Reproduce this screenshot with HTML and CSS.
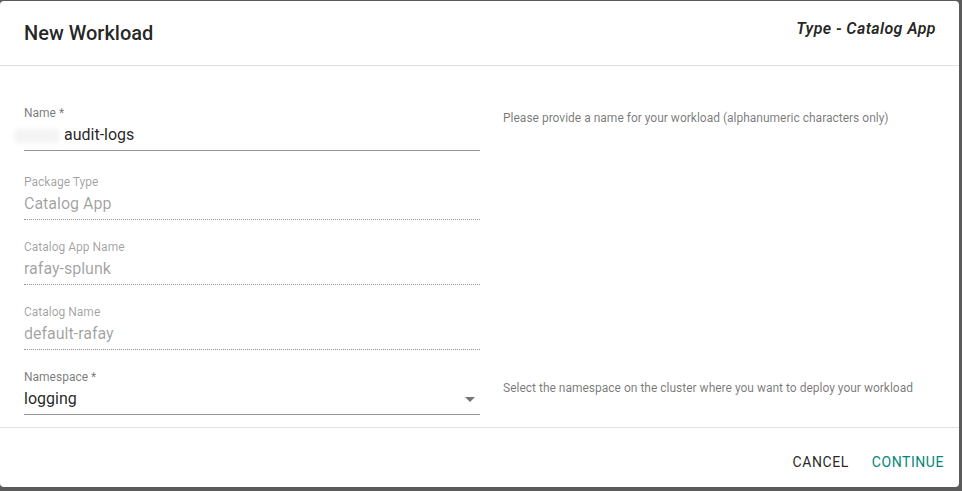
FILE: index.html
```html
<!DOCTYPE html>
<html lang="en">
<head>
    <meta charset="UTF-8">
    <meta name="viewport" content="width=device-width, initial-scale=1.0">
    <title>New Workload</title>
    <link rel="stylesheet" href="styles.css">
</head>
<body>

    <div class="dialog">
        <div class="dialog-header">
            <h2 class="dialog-title">New Workload</h2>
            <span class="dialog-type">Type - Catalog App</span>
        </div>

        <div class="dialog-content">
            <div class="row row-name">
                <div class="field">
                    <label class="field-label">Name *</label>
                    <div class="field-input"><span class="masked"></span>audit-logs</div>
                </div>
                <p class="hint">Please provide a name for your workload (alphanumeric characters only)</p>
            </div>

            <div class="row">
                <div class="field disabled">
                    <label class="field-label">Package Type</label>
                    <div class="field-input">Catalog App</div>
                </div>
            </div>

            <div class="row">
                <div class="field disabled">
                    <label class="field-label">Catalog App Name</label>
                    <div class="field-input">rafay-splunk</div>
                </div>
            </div>

            <div class="row">
                <div class="field disabled">
                    <label class="field-label">Catalog Name</label>
                    <div class="field-input">default-rafay</div>
                </div>
            </div>

            <div class="row">
                <div class="field">
                    <label class="field-label">Namespace *</label>
                    <div class="field-input select">
                        logging
                        <svg class="select-arrow" viewBox="0 0 24 24" width="24" height="24"><path d="M7 10l5 5 5-5z"/></svg>
                    </div>
                </div>
                <p class="hint hint-low">Select the namespace on the cluster where you want to deploy your workload</p>
            </div>
        </div>

        <div class="dialog-actions">
            <button class="btn">Cancel</button>
            <button class="btn btn-primary">Continue</button>
        </div>
    </div>

</body>
</html>
```

FILE: styles.css
```css
* {
    box-sizing: border-box;
}

body {
    margin: 0;
    height: 491px;
    overflow: hidden;
    background-color: #5b5b5b; /* backdrop behind the dialog */
    font-family: Roboto, "Liberation Sans", sans-serif;
    color: rgba(0, 0, 0, 0.87);
}

.dialog {
    margin-top: 1px;
    width: 959px;
    height: 486px;
    background: #fff;
    border-radius: 4px;
    display: flex;
    flex-direction: column;
}

/* header: title on the left, workload type on the right */
.dialog-header {
    height: 65px;
    padding: 17px 23px 0 24px;
    display: flex;
    justify-content: space-between;
    align-items: flex-start;
    border-bottom: 1px solid #e0e0e0;
}

.dialog-title {
    margin: 0;
    font-size: 20px;
    font-weight: 500;
    line-height: 30px;
}

.dialog-type {
    margin-top: 1px;
    font-size: 16px;
    font-style: italic;
    font-weight: 600;
    line-height: 20px;
    letter-spacing: 0.4px;
}

.dialog-content {
    flex: 1;
    padding: 40px 24px 12px;
    border-bottom: 1px solid #e0e0e0;
}

.row {
    display: grid;
    grid-template-columns: 456px 1fr;
    column-gap: 23px;
    margin-bottom: 20px;
}

.row:last-child {
    margin-bottom: 0;
}

.row-name {
    margin-bottom: 24px;
}

.field-label {
    display: block;
    font-size: 12px;
    line-height: 14px;
    color: rgba(0, 0, 0, 0.54);
}

.field-input {
    position: relative;
    padding: 5px 0 6px;
    font-size: 16px;
    line-height: 19px;
    border-bottom: 1px solid rgba(0, 0, 0, 0.42);
}

.field.disabled .field-label,
.field.disabled .field-input {
    color: rgba(0, 0, 0, 0.38);
}

.field.disabled .field-input {
    border-bottom-style: dotted;
}

/* blurred prefix in front of the name */
.masked {
    display: inline-block;
    width: 44px;
    height: 14px;
    margin: 0 5px 0 -9px;
    vertical-align: -3px;
    background: #f4f4f4;
    filter: blur(2px);
}

.select-arrow {
    position: absolute;
    right: -2px;
    top: calc(50% - 12px);
    fill: rgba(0, 0, 0, 0.54);
}

.hint {
    margin: 0;
    padding-top: 5px;
    font-size: 12px;
    line-height: 14px;
    color: rgba(0, 0, 0, 0.54);
}

.hint-low {
    padding-top: 11px;
}

.dialog-actions {
    height: 59px;
    padding: 16px 7px 0 0;
    display: flex;
    justify-content: flex-end;
    align-items: flex-start;
    gap: 7px;
}

.btn {
    min-width: 64px;
    padding: 6px 8px;
    border: 0;
    background: none;
    font-family: inherit;
    font-size: 14px;
    font-weight: 400;
    line-height: 24.5px;
    letter-spacing: 0.04em;
    text-transform: uppercase;
    color: rgba(0, 0, 0, 0.87);
    cursor: pointer;
}

.btn-primary {
    color: #00897b;
}
```
